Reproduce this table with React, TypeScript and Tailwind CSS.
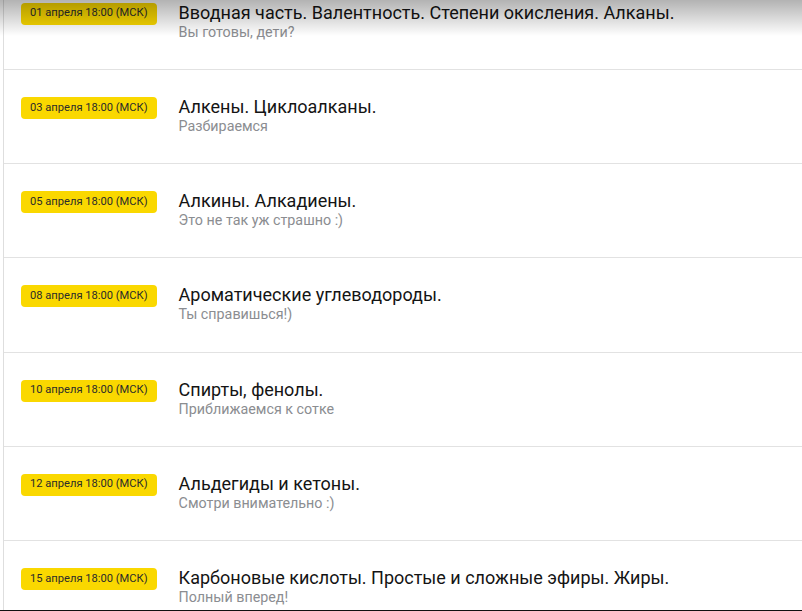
import React from "react";

const lessons = [
  { date: "01 апреля 18:00 (МСК)", title: "Вводная часть. Валентность. Степени окисления. Алканы.", sub: "Вы готовы, дети?" },
  { date: "03 апреля 18:00 (МСК)", title: "Алкены. Циклоалканы.", sub: "Разбираемся" },
  { date: "05 апреля 18:00 (МСК)", title: "Алкины. Алкадиены.", sub: "Это не так уж страшно :)" },
  { date: "08 апреля 18:00 (МСК)", title: "Ароматические углеводороды.", sub: "Ты справишься!)" },
  { date: "10 апреля 18:00 (МСК)", title: "Спирты, фенолы.", sub: "Приближаемся к сотке" },
  { date: "12 апреля 18:00 (МСК)", title: "Альдегиды и кетоны.", sub: "Смотри внимательно :)" },
  { date: "15 апреля 18:00 (МСК)", title: "Карбоновые кислоты. Простые и сложные эфиры. Жиры.", sub: "Полный вперед!" },
];

export default function App() {
  return (
    <div
      className="relative h-[611px] w-[802px] overflow-hidden bg-white"
      style={{ fontFamily: "Roboto, 'Noto Sans', sans-serif" }}
    >
      <div className="ml-[3px] mt-[-24.2px] border-l border-[#dedede]">
        {lessons.map((l, i) => (
          <div key={i} className="flex h-[94.2px] items-start gap-[22px] border-b border-[#e2e2e2] pl-[17px] pt-[26px]">
            <div className="mt-[1px] flex h-[22px] shrink-0 items-center rounded-[4px] bg-[#fad800] px-[9px] text-[11.15px] text-[#2b2b2b]">
              {l.date}
            </div>
            <div className="flex flex-col">
              <div className="text-[18px] leading-[22px] text-[#141414]">{l.title}</div>
              <div className="text-[14.3px] leading-[17px] text-[#8b8d91]">{l.sub}</div>
            </div>
          </div>
        ))}
      </div>
      <div className="pointer-events-none absolute left-0 right-0 top-0 h-[36px] bg-gradient-to-b from-black/30 to-transparent" />
      <div className="absolute bottom-0 left-0 right-0 h-px bg-[#111]" />
    </div>
  );
}
